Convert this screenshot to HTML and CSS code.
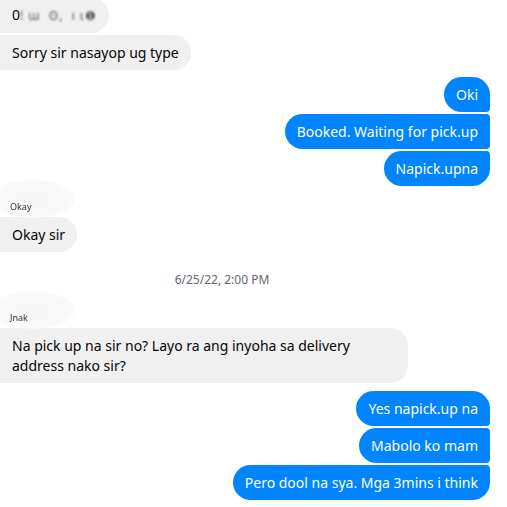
FILE: index.html
```html
<!DOCTYPE html>
<html>
<head>
<meta charset="utf-8">
<link rel="stylesheet" href="styles.css">
</head>
<body>
<div class="chat">
  <div class="row left first-row">
    <div class="bubble in top">0<span class="blur">! ɯ &nbsp;ʘ, &nbsp;ı ɩ❶</span></div>
  </div>
  <div class="row left">
    <div class="bubble in bottom">Sorry sir nasayop ug type</div>
  </div>

  <div class="group right g1">
    <div class="bubble out top">Oki</div>
    <div class="bubble out mid">Booked. Waiting for pick.up</div>
    <div class="bubble out bottom">Napick.upna</div>
  </div>

  <div class="sender"><div class="halo"></div><span class="name">Okay</span></div>
  <div class="row left">
    <div class="bubble in">Okay sir</div>
  </div>

  <div class="stamp">6/25/22, 2:00 PM</div>

  <div class="sender s2"><div class="halo"></div><span class="name">Jnak</span></div>
  <div class="row left">
    <div class="bubble in wide">Na pick up na sir no? Layo ra ang inyoha sa delivery address nako sir?</div>
  </div>

  <div class="group right g2">
    <div class="bubble out top">Yes napick.up na</div>
    <div class="bubble out mid">Mabolo ko mam</div>
    <div class="bubble out bottom">Pero dool na sya. Mga 3mins i think</div>
  </div>
</div>
</body>
</html>
```
FILE: styles.css
```css
html, body {
  margin: 0;
  padding: 0;
  background: #ffffff;
}
body {
  width: 507px;
  height: 507px;
  overflow: hidden;
  font-family: "Noto Sans", "Open Sans", sans-serif;
}
.chat {
  display: flex;
  flex-direction: column;
  padding: 0 17px 0 0;
}
.row {
  display: flex;
}
.first-row {
  margin-top: -3px;
}
.row.left + .row.left {
  margin-top: 2px;
}
.group {
  display: flex;
  flex-direction: column;
  align-items: flex-end;
  gap: 2px;
}
.g1 { margin-top: 7px; }
.g2 { margin-top: 8px; }
.bubble {
  font-size: 14px;
  line-height: 19px;
  padding: 8px 12px;
  border-radius: 18px;
  box-sizing: border-box;
  min-height: 35px;
  white-space: nowrap;
}
.bubble.in {
  background: #f0f0f0;
  color: #050505;
  border-radius: 0 18px 18px 0;
}
.bubble.out {
  background: #0084ff;
  color: #ffffff;
}
.bubble.out.top { border-radius: 18px 18px 4px 18px; }
.bubble.out.mid { border-radius: 18px 4px 4px 18px; }
.bubble.out.bottom { border-radius: 18px 4px 18px 18px; }
.bubble.wide {
  white-space: normal;
  width: 408px;
  line-height: 20px;
  padding: 8px 12px 7px;
}
.blur {
  filter: blur(0.8px);
  color: #555;
  letter-spacing: 1px;
  font-size: 12px;
}
.sender {
  position: relative;
  height: 27px;
  display: flex;
  align-items: flex-end;
  padding-left: 10px;
  margin-bottom: 4px;
}
.halo {
  position: absolute;
  left: -10px;
  top: -6px;
  width: 85px;
  height: 38px;
  border-radius: 50%;
  background: radial-gradient(ellipse at center, #f6f6f6 0%, #f9f9f9 60%, rgba(255,255,255,0) 100%);
}
.name {
  position: relative;
  font-size: 9px;
  line-height: 12px;
  color: #333;
  filter: blur(0.7px);
}
.stamp {
  text-align: center;
  font-size: 12px;
  line-height: 16px;
  color: #65676b;
  margin-top: 20px;
  padding-right: 46px;
}
.s2 {
  margin-top: 9px;
}
```
